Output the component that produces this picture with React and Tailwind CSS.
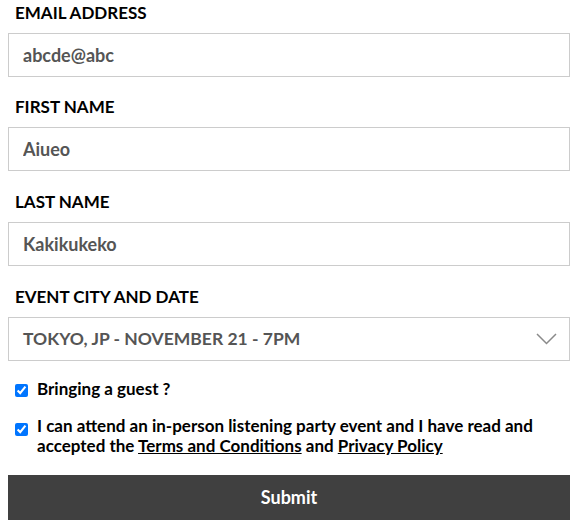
export default function App() {
  const fields = [
    { label: "EMAIL ADDRESS", value: "abcde@abc", gap: "mb-[17px]" },
    { label: "FIRST NAME", value: "Aiueo", gap: "mb-[18px]" },
    { label: "LAST NAME", value: "Kakikukeko", gap: "mb-[18px]" },
  ];

  return (
    <div className="w-[584px] pl-2 pr-[14px] bg-white font-['Lato',sans-serif] font-bold text-black">
      {fields.map((f) => (
        <div key={f.label} className={f.gap}>
          <label className="block pl-[7px] text-[17px] leading-[26px] mb-[7px]">{f.label}</label>
          <input
            readOnly
            value={f.value}
            className="w-full h-[44px] border border-[#cccccc] px-[14px] text-[18px] font-bold text-[#555555] outline-none"
          />
        </div>
      ))}

      <div>
        <label className="block pl-[7px] text-[17px] leading-[26px] mb-[7px]">EVENT CITY AND DATE</label>
        <div className="flex items-center justify-between h-[44px] border border-[#cccccc] pl-[14px] pr-[12px]">
          <span className="text-[17.5px] text-[#555555]">TOKYO, JP - NOVEMBER 21 - 7PM</span>
          <svg width="21" height="12" viewBox="0 0 21 12" fill="none">
            <polyline points="1,1 10.5,10.5 20,1" stroke="#8a8a8a" strokeWidth="1.5" />
          </svg>
        </div>
      </div>

      <div className="pl-[7px] mt-[18px] text-[17px] leading-[20px]">
        <label className="flex items-start gap-[9px]">
          <input type="checkbox" defaultChecked className="m-0 mt-[5px] w-[13px] h-[13px] shrink-0 accent-[#0075ff]" />
          <span>Bringing a guest ?</span>
        </label>
        <label className="flex items-start gap-[9px] mt-[17px]">
          <input type="checkbox" defaultChecked className="m-0 mt-[7px] w-[13px] h-[13px] shrink-0 accent-[#0075ff]" />
          <span>
            I can attend an in-person listening party event and I have read and accepted the{" "}
            <a className="underline">Terms and Conditions</a> and <a className="underline">Privacy Policy</a>
          </span>
        </label>
      </div>

      <button className="mt-[19px] w-full h-[45px] bg-[#404040] text-white text-[18px] font-bold">Submit</button>
    </div>
  );
}
